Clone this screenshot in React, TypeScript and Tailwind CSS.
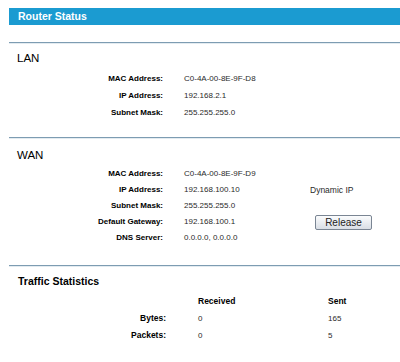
import React from "react";

type Row = { label: string; value: string; extra?: React.ReactNode };

const lan: Row[] = [
  { label: "MAC Address:", value: "C0-4A-00-8E-9F-D8" },
  { label: "IP Address:", value: "192.168.2.1" },
  { label: "Subnet Mask:", value: "255.255.255.0" },
];

function ReleaseButton() {
  return (
    <button className="ml-[5px] h-[15px] w-[57px] rounded-[2px] border border-[#7a8593] bg-gradient-to-b from-[#fbfcfd] to-[#d9dee5] text-[10px] leading-[13px] text-[#222]">
      Release
    </button>
  );
}

const wan: Row[] = [
  { label: "MAC Address:", value: "C0-4A-00-8E-9F-D9" },
  { label: "IP Address:", value: "192.168.100.10", extra: <span className="text-[8.5px]">Dynamic IP</span> },
  { label: "Subnet Mask:", value: "255.255.255.0" },
  { label: "Default Gateway:", value: "192.168.100.1", extra: <ReleaseButton /> },
  { label: "DNS Server:", value: "0.0.0.0, 0.0.0.0" },
];

function Divider() {
  return <div className="h-[2px] border-t border-[#7d9cb2] bg-[#e3ebf0]" />;
}

function InfoRow({ row, height }: { row: Row; height: string }) {
  return (
    <div className={`flex items-center text-[8px] ${height}`}>
      <span className="w-[154px] text-right font-bold text-black">{row.label}</span>
      <span className="ml-[21px] w-[126px] text-[#2a2a2a]">{row.value}</span>
      <span className="text-[#2a2a2a]">{row.extra}</span>
    </div>
  );
}

export default function App() {
  return (
    <div
      className="h-[362px] w-[400px] overflow-hidden bg-white pl-[9px] pt-[8px]"
      style={{ fontFamily: '"Liberation Sans", Arial, sans-serif' }}
    >
      <div className="h-[17px] bg-[#1b9bd1] pl-[9px] text-[10.5px] font-bold leading-[17px] text-white">
        Router Status
      </div>

      <div className="mt-[17px]">
        <Divider />
        <div className="ml-[8px] mt-[6px] text-[11.5px] leading-[16px] text-black">LAN</div>
        <div className="mt-[4px]">
          {lan.map((r) => (
            <InfoRow key={r.label} row={r} height="h-[17px]" />
          ))}
        </div>
      </div>

      <div className="mt-[16px]">
        <Divider />
        <div className="ml-[8px] mt-[8px] text-[11.5px] leading-[16px] text-black">WAN</div>
        <div className="mt-[3px]">
          {wan.map((r) => (
            <InfoRow key={r.label} row={r} height="h-[16px]" />
          ))}
        </div>
      </div>

      <div className="mt-[19px]">
        <Divider />
        <div className="ml-[9px] mt-[6px] text-[10.5px] font-bold leading-[16px] text-black">
          Traffic Statistics
        </div>
        <div className="mt-[4px] flex h-[17px] items-center text-[8.5px]">
          <span className="w-[189px]" />
          <span className="w-[130px] font-bold text-black">Received</span>
          <span className="font-bold text-black">Sent</span>
        </div>
        {[
          ["Bytes:", "0", "165"],
          ["Packets:", "0", "5"],
        ].map(([l, r, s]) => (
          <div key={l} className="flex h-[17px] items-center">
            <span className="w-[157px] text-right text-[8.5px] font-bold text-black">{l}</span>
            <span className="ml-[32px] w-[130px] text-[8px] text-[#2a2a2a]">{r}</span>
            <span className="text-[8px] text-[#2a2a2a]">{s}</span>
          </div>
        ))}
      </div>
    </div>
  );
}
